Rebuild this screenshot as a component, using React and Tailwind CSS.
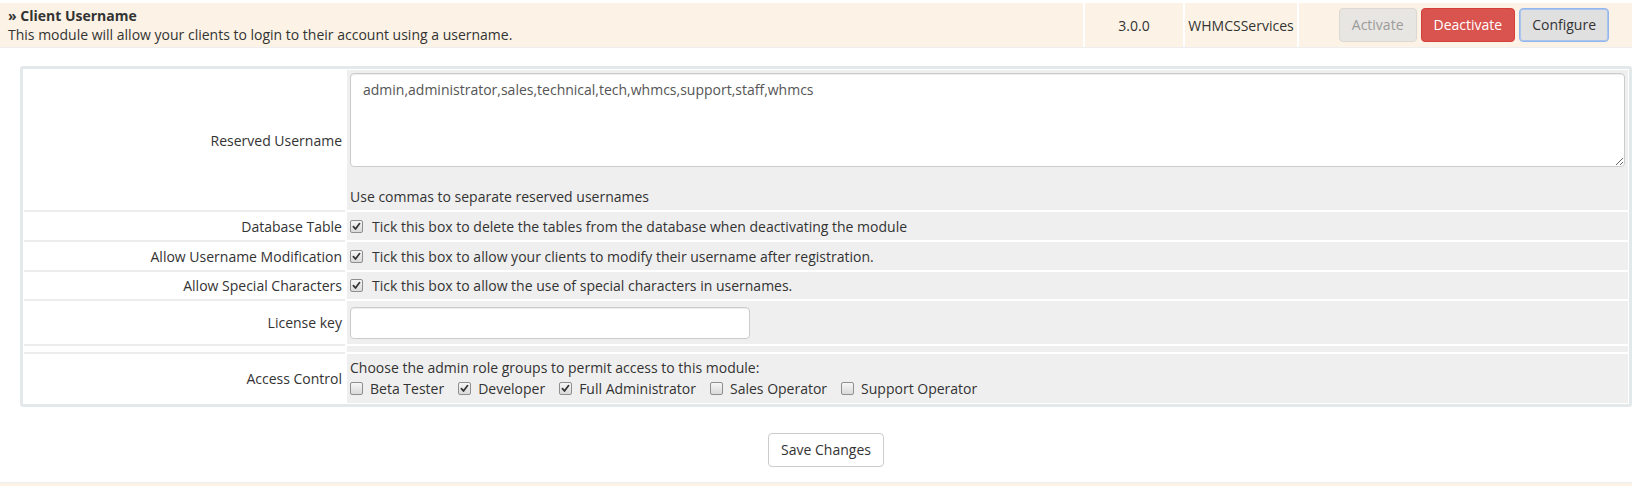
import React from "react";

const Box = ({ checked }) => (
  <span className="inline-flex w-[13px] h-[13px] shrink-0 items-center justify-center rounded-[2px] border border-[#8f8f8f] bg-linear-to-b from-[#f6f6f6] to-[#dadada]">
    {checked && (
      <svg width="9" height="9" viewBox="0 0 9 9">
        <path d="M1.4 4.6 L3.5 7 L7.6 1.6" stroke="#333" strokeWidth="1.7" fill="none" strokeLinecap="round" strokeLinejoin="round" />
      </svg>
    )}
  </span>
);

const Label = ({ children, h }) => (
  <div className={`w-[321px] shrink-0 bg-white border-b-2 border-[#ececec] flex items-center justify-end pr-[3px] ${h}`}>
    {children}
  </div>
);

export default function App() {
  return (
    <div className="font-['Open_Sans',sans-serif] text-[14px] text-[#333] bg-white w-[1632px] h-[486px] overflow-hidden">
      {/* module header row */}
      <div className="pt-[3px]">
        <div className="flex h-[45px] border-b border-[#eeeeee]">
          <div className="w-[1083px] bg-[#fcf3e6] pl-[8px] flex flex-col justify-center leading-[19px]">
            <div className="font-bold">» Client Username</div>
            <div>This module will allow your clients to login to their account using a username.</div>
          </div>
          <div className="w-[98px] ml-[2px] bg-[#fcf3e6] flex items-center justify-center">3.0.0</div>
          <div className="w-[112px] ml-[2px] bg-[#fcf3e6] flex items-center justify-center">WHMCSServices</div>
          <div className="flex-1 ml-[2px] bg-[#fcf3e6] flex items-center justify-end pr-[23px] gap-[4px]">
            <button className="h-[34px] px-[12px] rounded-[4px] border border-[#dcd8d2] bg-[#e8e6e2] text-[#9b9b9b] leading-[20px]">Activate</button>
            <button className="h-[34px] px-[12px] rounded-[4px] border border-[#d43f3a] bg-[#d9534f] text-white leading-[20px]">Deactivate</button>
            <button className="h-[34px] px-[12px] rounded-[4px] border border-[#93b6ec] shadow-[inset_0_0_0_1px_#a9c4ee] bg-[#e0e0e0] text-[#333] leading-[20px]">Configure</button>
          </div>
        </div>
      </div>

      {/* config box */}
      <div className="mt-[18px] ml-[20px] w-[1612px] border-[3px] border-[#e3e8eb] rounded-[3px] p-[1px] bg-white">
        <div className="flex">
          <Label h="h-[142px]">Reserved Username</Label>
          <div className="flex-1 ml-[2px] bg-[#efefef] border-b-2 border-white pl-[3px] pr-[3px] pt-[3px] h-[142px]">
            <textarea
              className="block w-full h-[94px] border border-[#ccc] rounded-[4px] bg-white px-[12px] py-[6px] text-[14px] leading-[20px] text-[#555] shadow-[inset_0_1px_1px_rgba(0,0,0,0.075)] outline-none font-['Open_Sans',sans-serif]"
              defaultValue="admin,administrator,sales,technical,tech,whmcs,support,staff,whmcs"
            />
            <div className="mt-[20px] leading-[20px]">Use commas to separate reserved usernames</div>
          </div>
        </div>

        <div className="flex">
          <Label h="h-[30px]">Database Table</Label>
          <div className="flex-1 ml-[2px] bg-[#efefef] border-b-2 border-white px-[3px] h-[30px] flex items-center gap-[9px]">
            <Box checked />
            <span>Tick this box to delete the tables from the database when deactivating the module</span>
          </div>
        </div>

        <div className="flex">
          <Label h="h-[30px]">Allow Username Modification</Label>
          <div className="flex-1 ml-[2px] bg-[#efefef] border-b-2 border-white px-[3px] h-[30px] flex items-center gap-[9px]">
            <Box checked />
            <span>Tick this box to allow your clients to modify their username after registration.</span>
          </div>
        </div>

        <div className="flex">
          <Label h="h-[29px]">Allow Special Characters</Label>
          <div className="flex-1 ml-[2px] bg-[#efefef] border-b-2 border-white px-[3px] h-[29px] flex items-center gap-[9px]">
            <Box checked />
            <span>Tick this box to allow the use of special characters in usernames.</span>
          </div>
        </div>

        <div className="flex">
          <Label h="h-[45px]">License key</Label>
          <div className="flex-1 ml-[2px] bg-[#efefef] border-b-2 border-white px-[3px] pt-[6px] h-[45px]">
            <input
              type="text"
              className="block w-[400px] h-[32px] border border-[#ccc] rounded-[4px] bg-white shadow-[inset_0_1px_1px_rgba(0,0,0,0.075)] outline-none"
            />
          </div>
        </div>

        <div className="flex">
          <Label h="h-[8px]"></Label>
          <div className="flex-1 ml-[2px] bg-[#efefef] border-b-2 border-white h-[8px]"></div>
        </div>

        <div className="flex">
          <div className="w-[321px] shrink-0 bg-white flex items-center justify-end pr-[3px] h-[49px]">Access Control</div>
          <div className="flex-1 ml-[2px] bg-[#efefef] px-[3px] pt-[3px] h-[49px] leading-[21px]">
            <div>Choose the admin role groups to permit access to this module:</div>
            <div className="flex items-center">
              <Box />
              <span className="ml-[7px] mr-[14px]">Beta Tester</span>
              <Box checked />
              <span className="ml-[7px] mr-[14px]">Developer</span>
              <Box checked />
              <span className="ml-[7px] mr-[14px]">Full Administrator</span>
              <Box />
              <span className="ml-[7px] mr-[14px]">Sales Operator</span>
              <Box />
              <span className="ml-[7px]">Support Operator</span>
            </div>
          </div>
        </div>
      </div>

      <div className="ml-[20px] w-[1612px] flex justify-center mt-[26px]">
        <button className="h-[34px] px-[12px] rounded-[4px] border border-[#ccc] bg-white text-[#333] leading-[20px]">Save Changes</button>
      </div>

      <div className="mt-[15px] border-t border-[#eeeeee] bg-[#fcf3e6] h-[20px]"></div>
    </div>
  );
}
